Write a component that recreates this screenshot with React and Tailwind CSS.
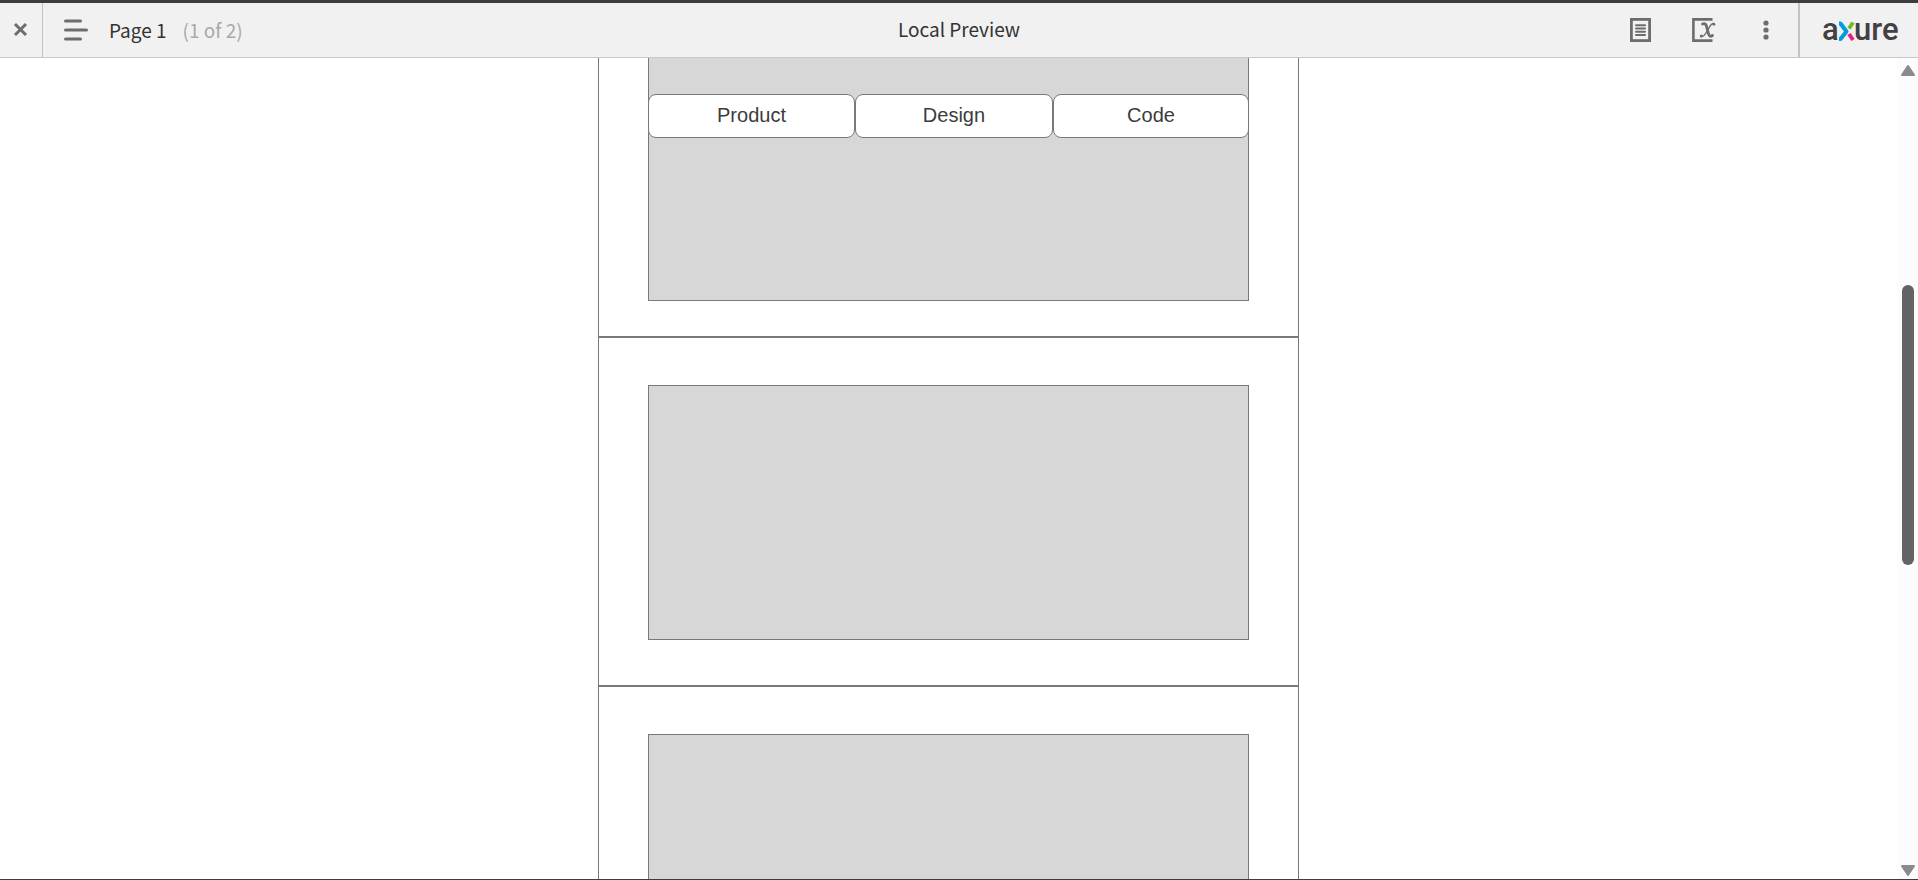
const iconButton = 'flex shrink-0 items-center justify-center text-[#6d6d6d]';

function AxureLogo() {
  return (
    <a href="#home" aria-label="axure" className="flex items-center">
      <svg width="80" height="48" viewBox="0 0 80 48" aria-hidden="true" className="overflow-visible">
        <g fill="#414042" fontFamily="Roboto, sans-serif" fontWeight="500" fontSize="31">
          <text x="0" y="34">a</text>
          <text x="32" y="34">ure</text>
        </g>
        <g fill="none" strokeWidth="4">
          <path d="M17 17.500H18.500L24.500 25.500L18.500 33H17" stroke="#009cdb" strokeLinejoin="round" />
          <path d="M31 16.500L27 22.500" stroke="#76b82a" />
          <path d="M31 34L27 28" stroke="#ee1c8a" />
        </g>
      </svg>
    </a>
  );
}

function Header() {
  return (
    <header className="relative flex h-[55px] shrink-0 items-stretch border-b border-[#c8c8c8] bg-[#f1f1f1] font-['Noto_Sans_CJK_SC',sans-serif] text-[19px] text-[#333333]">
      <button type="button" aria-label="Close" className={`${iconButton} w-[43px] border-r border-[#c2c2c2]`}>
        <svg width="16" height="16" viewBox="0 0 16 16" fill="none" stroke="currentColor" strokeWidth="3">
          <path d="M2 2L13 13M13 2L2 13" />
        </svg>
      </button>
      <button type="button" aria-label="Project pages" className={`${iconButton} ml-5`}>
        <svg width="26" height="24" viewBox="0 0 26 24" fill="none" stroke="currentColor" strokeWidth="3" strokeLinecap="round">
          <path d="M2.500 3H17.500M2.500 12H23.500M2.500 21H17.500" />
        </svg>
      </button>
      <div className="ml-5 flex items-center gap-4">
        <span>Page 1</span>
        <span className="text-[#a9a9a9]">(1 of 2)</span>
      </div>
      <h1 className="pointer-events-none absolute inset-0 flex items-center justify-center pb-0.5">Local Preview</h1>
      <div className="ml-auto flex items-center">
        <button type="button" aria-label="Documentation" className={iconButton}>
          <svg width="22" height="24" viewBox="0 0 22 24" fill="none" stroke="currentColor">
            <rect x="1.400" y="1.400" width="18.200" height="21.200" strokeWidth="2.800" />
            <path d="M6 7.300H15M6 10.500H15M6 13.700H15M6 16.900H15" strokeWidth="2" strokeLinecap="round" />
          </svg>
        </button>
        <button type="button" aria-label="Variables" className={`${iconButton} ml-10`}>
          <svg width="24" height="24" viewBox="0 0 24 24" fill="none" stroke="currentColor" strokeLinecap="round">
            <path d="M20.500 1.400H1.400V22.600H20.500" strokeWidth="2.600" strokeLinecap="butt" />
            <path d="M10.500 6C14 4.500 14.500 7.500 15.500 12C16.500 17 17.500 19.500 20.500 17.500" strokeWidth="2.800" />
            <path d="M22 5.500C19 4.500 17.500 9.500 15.500 12.500C13.500 16 11.500 19.500 9 18.500" strokeWidth="1.500" />
            <circle cx="21.900" cy="6.300" r="1.400" fill="currentColor" stroke="none" />
            <circle cx="9.300" cy="18" r="1.500" fill="currentColor" stroke="none" />
          </svg>
        </button>
        <button type="button" aria-label="More options" className={`${iconButton} ml-11`}>
          <svg width="12" height="20" viewBox="0 0 12 20" fill="currentColor">
            <circle cx="6" cy="3" r="2.600" />
            <circle cx="6" cy="10" r="2.600" />
            <circle cx="6" cy="17" r="2.600" />
          </svg>
        </button>
      </div>
      <div className="ml-[26px] flex items-center border-l-2 border-[#c2c2c2] pr-4 pl-[22px]">
        <AxureLogo />
      </div>
    </header>
  );
}

function Tab({ children }) {
  return (
    <button type="button" className="h-11 rounded-lg border border-[#797979] bg-white pb-0.5 text-xl text-[#3c3c3c]">
      {children}
    </button>
  );
}

function Scrollbar() {
  return (
    <div aria-hidden="true" className="flex w-[21px] shrink-0 flex-col items-center bg-[#fcfcfc] pt-[7px] pb-[3px] pl-1 pr-[3px]">
      <svg width="14" height="11" viewBox="0 0 14 11" className="shrink-0" fill="#8b8b8b" stroke="#8b8b8b" strokeWidth="2" strokeLinejoin="round">
        <path d="M7 1L13 10H1Z" />
      </svg>
      <div className="flex min-h-0 flex-1 flex-col">
        <div className="grow-[209]" />
        <div className="w-3 grow-[280] rounded-full bg-[#636363]" />
        <div className="grow-[300]" />
      </div>
      <svg width="14" height="11" viewBox="0 0 14 11" className="shrink-0" fill="#8b8b8b" stroke="#8b8b8b" strokeWidth="2" strokeLinejoin="round">
        <path d="M7 10L1 1H13Z" />
      </svg>
    </div>
  );
}

export default function App() {
  return (
    <div className="flex h-screen flex-col overflow-hidden border-t-[3px] border-b border-[#3e3c3d] bg-white">
      <Header />
      <div className="flex min-h-0 flex-1">
        <main className="min-w-0 flex-1 overflow-hidden font-['Liberation_Sans',sans-serif]">
          <div className="mx-auto max-w-[701px] border-x border-[#797979]">
            <section className="border-b border-[#797979] px-[49px] pb-[35px]">
              <div className="border-x border-b border-[#797979] bg-[#d7d7d7] pt-9 pb-[162px]">
                <div className="-mx-px grid grid-cols-[207fr_198fr_196fr]">
                  <Tab>Product</Tab>
                  <Tab>Design</Tab>
                  <Tab>Code</Tab>
                </div>
              </div>
            </section>
            <section className="border-y border-[#797979] px-[49px] pt-[47px] pb-[45px]">
              <div className="h-[255px] border border-[#797979] bg-[#d7d7d7]" />
            </section>
            <section className="border-y border-[#797979] px-[49px] pt-[47px] pb-[45px]">
              <div className="h-[255px] border border-[#797979] bg-[#d7d7d7]" />
            </section>
          </div>
        </main>
        <Scrollbar />
      </div>
    </div>
  );
}
